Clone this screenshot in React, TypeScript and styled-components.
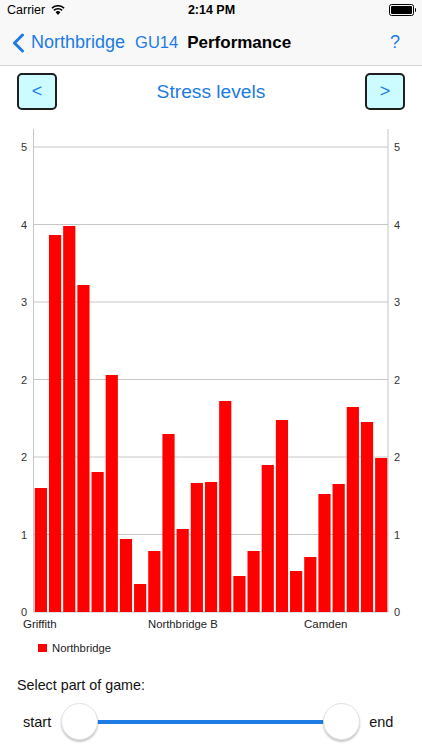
import styled, { createGlobalStyle } from "styled-components"

const GlobalStyle = createGlobalStyle`
  html, body {
    margin: 0;
    padding: 0;
    background: #ffffff;
    font-family: "Liberation Sans", Arial, sans-serif;
  }
`

const Blue = "#1d7be3"

const Page = styled.div`
  width: 422px;
  height: 750px;
  display: flex;
  flex-direction: column;
  overflow: hidden;
  background: #fff;
`

const Header = styled.div`
  background: #f8f8f8;
  border-bottom: 1px solid #d6d6d6;
  display: flex;
  flex-direction: column;
`

const StatusBar = styled.div`
  height: 20px;
  display: grid;
  grid-template-columns: 1fr auto 1fr;
  align-items: center;
  padding: 0 6px 0 7px;
  font-size: 12.5px;
  color: #000;
`

const Carrier = styled.div`
  display: flex;
  align-items: center;
  gap: 6px;
`

const Clock = styled.div`
  font-weight: bold;
`

const Battery = styled.div`
  justify-self: end;
  display: flex;
  align-items: center;
`

const BatteryBody = styled.div`
  width: 21px;
  height: 8px;
  border: 1px solid #000;
  border-radius: 2.5px;
  padding: 1px;
  display: flex;
`

const BatteryFill = styled.div`
  flex: 1;
  background: #000;
  border-radius: 1px;
`

const BatteryNub = styled.div`
  width: 1.5px;
  height: 4px;
  background: #000;
  border-radius: 0 1px 1px 0;
  margin-left: 1px;
`

const NavBar = styled.div`
  height: 45px;
  display: flex;
  align-items: center;
  padding: 0 22px 0 12px;
`

const BackLink = styled.div`
  display: flex;
  align-items: center;
  color: ${Blue};
  font-size: 18px;
  gap: 6px;
`

const NavItem = styled.div<{ $bold?: boolean; $size: number }>`
  font-size: ${(p) => p.$size}px;
  font-weight: ${(p) => (p.$bold ? "bold" : "normal")};
  color: ${(p) => (p.$bold ? "#000" : Blue)};
  margin-left: ${(p) => (p.$bold ? 9 : 10)}px;
`

const Help = styled.div`
  margin-left: auto;
  color: ${Blue};
  font-size: 18px;
`

const Toolbar = styled.div`
  margin-top: 7px;
  height: 37px;
  padding: 0 17px;
  display: flex;
  align-items: center;
  justify-content: space-between;
`

const PageButton = styled.button`
  width: 40px;
  height: 37px;
  box-sizing: border-box;
  background: #ccfcff;
  border: 2px solid #1e1e1e;
  border-radius: 5px;
  color: ${Blue};
  font-family: "Liberation Sans", Arial, sans-serif;
  font-size: 18px;
  padding: 0;
  display: flex;
  align-items: center;
  justify-content: center;
`

const Title = styled.div`
  color: ${Blue};
  font-size: 19.2px;
`

const Chart = styled.svg`
  display: block;
  width: 422px;
  height: 525px;
  font-family: "Liberation Sans", Arial, sans-serif;
`

const Legend = styled.div`
  margin-top: 8px;
  height: 10px;
  padding-left: 38px;
  display: flex;
  align-items: center;
  gap: 5px;
  font-size: 11.3px;
  color: #222;
`

const LegendSwatch = styled.div`
  width: 9px;
  height: 8px;
  background: #ff0000;
`

const SectionLabel = styled.div`
  margin-top: 23px;
  padding-left: 17px;
  height: 18px;
  line-height: 18px;
  font-size: 14.3px;
  color: #111;
`

const SliderRow = styled.div`
  margin-top: 8px;
  height: 40px;
  display: flex;
  align-items: center;
  padding-left: 23px;
  font-size: 14.5px;
  color: #111;
`

const SliderTrack = styled.div`
  position: relative;
  width: 299px;
  height: 40px;
  margin: 0 9px 0 10px;
`

const TrackLine = styled.div`
  position: absolute;
  left: 18px;
  right: 18px;
  top: 18px;
  height: 4px;
  background: ${Blue};
`

const Thumb = styled.div<{ $left: number }>`
  position: absolute;
  left: ${(p) => p.$left}px;
  top: 1px;
  width: 37px;
  height: 37px;
  box-sizing: border-box;
  border-radius: 50%;
  background: #fff;
  border: 1px solid #e2e2e2;
  box-shadow: 0 2px 2px rgba(0, 0, 0, 0.22);
`

// bar tops measured in page pixels, baseline at 612
const barTops = [
  488, 235, 226, 285, 472, 375, 539, 584, 551, 434, 529, 483, 482, 401, 576,
  551, 465, 420, 571, 557, 494, 484, 407, 422, 458,
]

const OFFSET = 110
const LEFT = 33.5
const RIGHT = 388
const BASE = 612 - OFFSET
const STEP = 77.5
const tickLabels = ["0", "1", "2", "2", "3", "4", "5"]

const Wifi = () => (
  <svg width="14" height="10" viewBox="0 0 14 10">
    <path d="M7 10 L4.6 7.3 A3.4 3.4 0 0 1 9.4 7.3 Z" fill="#000" />
    <path d="M2.9 5.4 A5.8 5.8 0 0 1 11.1 5.4" stroke="#000" strokeWidth="1.6" fill="none" />
    <path d="M0.9 3.3 A8.6 8.6 0 0 1 13.1 3.3" stroke="#000" strokeWidth="1.6" fill="none" />
  </svg>
)

const Chevron = () => (
  <svg width="13" height="20" viewBox="0 0 13 20">
    <path d="M10.5 2 L2.5 10 L10.5 18" stroke={Blue} strokeWidth="3" fill="none" strokeLinecap="round" strokeLinejoin="round" />
  </svg>
)

const StressChart = () => {
  const slot = (RIGHT - LEFT) / barTops.length
  return (
    <Chart viewBox="0 0 422 525">
      {tickLabels.map((label, i) => {
        const y = BASE - i * STEP
        return (
          <g key={i}>
            <line x1={LEFT} x2={RIGHT} y1={y} y2={y} stroke="#c6c6c6" strokeWidth="1" />
            <text x={27} y={y + 4} fontSize="11" fill="#333" textAnchor="end">{label}</text>
            <text x={394} y={y + 4} fontSize="11" fill="#333">{label}</text>
          </g>
        )
      })}
      <line x1={LEFT} x2={LEFT} y1={19} y2={BASE} stroke="#c6c6c6" strokeWidth="1" />
      <line x1={RIGHT} x2={RIGHT} y1={19} y2={BASE} stroke="#c6c6c6" strokeWidth="1" />
      {barTops.map((top, i) => (
        <rect
          key={i}
          x={LEFT + i * slot + 1.3}
          y={top - OFFSET}
          width={slot - 2}
          height={612 - top}
          fill="#ff0000"
        />
      ))}
      <text x={23} y={518} fontSize="11.5" fill="#222">Griffith</text>
      <text x={148} y={518} fontSize="11.3" fill="#222">Northbridge B</text>
      <text x={304} y={518} fontSize="11.5" fill="#222">Camden</text>
    </Chart>
  )
}

const App = () => {
  return (
    <Page>
      <GlobalStyle />
      <Header>
        <StatusBar>
          <Carrier>
            Carrier
            <Wifi />
          </Carrier>
          <Clock>2:14 PM</Clock>
          <Battery>
            <BatteryBody>
              <BatteryFill />
            </BatteryBody>
            <BatteryNub />
          </Battery>
        </StatusBar>
        <NavBar>
          <BackLink>
            <Chevron />
            Northbridge
          </BackLink>
          <NavItem $size={16.5}>GU14</NavItem>
          <NavItem $bold $size={17}>Performance</NavItem>
          <Help>?</Help>
        </NavBar>
      </Header>

      <Toolbar>
        <PageButton>&lt;</PageButton>
        <Title>Stress levels</Title>
        <PageButton>&gt;</PageButton>
      </Toolbar>

      <StressChart />

      <Legend>
        <LegendSwatch />
        Northbridge
      </Legend>

      <SectionLabel>Select part of game:</SectionLabel>

      <SliderRow>
        start
        <SliderTrack>
          <TrackLine />
          <Thumb $left={0} />
          <Thumb $left={262} />
        </SliderTrack>
        end
      </SliderRow>
    </Page>
  )
}

export default App
